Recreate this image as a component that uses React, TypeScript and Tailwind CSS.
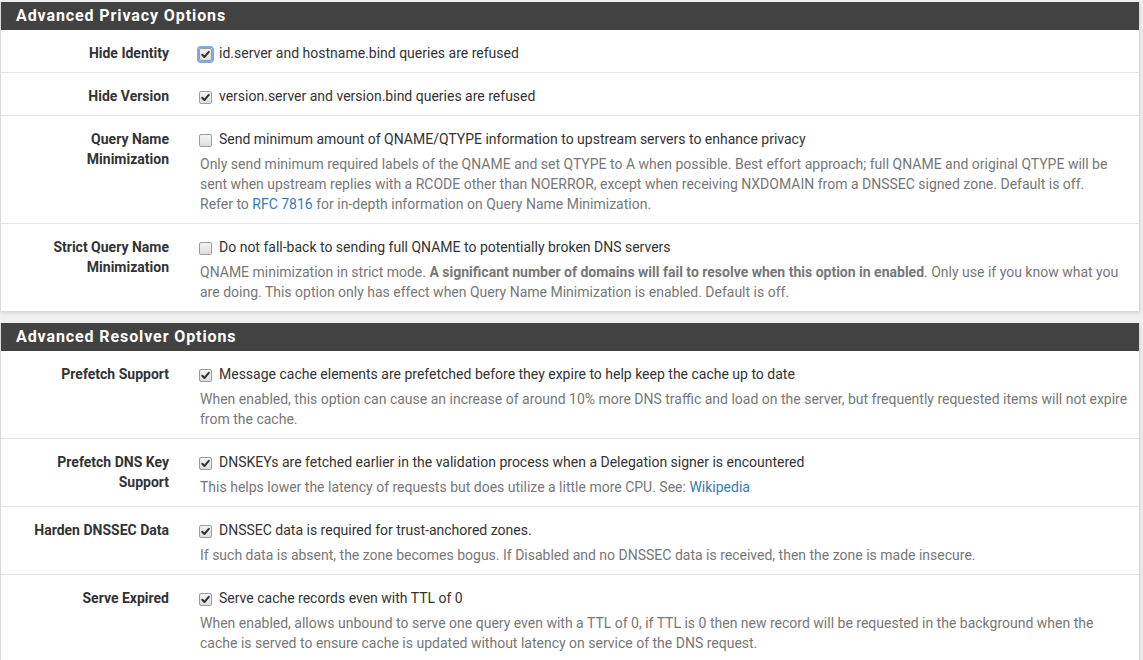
import React from "react";

const font = { fontFamily: "Roboto, 'Noto Sans', Arial, sans-serif" };

function Check({ checked, focus }: { checked?: boolean; focus?: boolean }) {
  return (
    <span
      className={
        "mt-[5px] flex h-[13px] w-[13px] shrink-0 items-center justify-center rounded-[2px] border border-[#9d9d9d] bg-gradient-to-b from-[#f4f4f4] to-[#dedede] " +
        (focus ? "outline outline-2 outline-[#7fa9ea] outline-offset-0" : "")
      }
    >
      {checked && (
        <svg width="11" height="11" viewBox="0 0 11 11">
          <path d="M2.2 5.8 L4.4 8 L8.8 2.8" fill="none" stroke="#333" strokeWidth="2" strokeLinecap="round" strokeLinejoin="round" />
        </svg>
      )}
    </span>
  );
}

function Row({
  label,
  checked,
  focus,
  text,
  help,
  first,
}: {
  label: React.ReactNode;
  checked?: boolean;
  focus?: boolean;
  text: React.ReactNode;
  help?: React.ReactNode;
  first?: boolean;
}) {
  return (
    <div className={"flex pt-[13px] pb-[9px] " + (first ? "" : "border-t border-[#e3e3e3]")}>
      <div className="w-[168px] shrink-0 pl-[15px] text-right text-[14px] font-bold leading-[20px] text-[#333]">
        {label}
      </div>
      <div className="ml-[30px] w-[930px] text-[14px] leading-[20px]">
        <div className="flex items-start gap-[7px] text-[#333]">
          <Check checked={checked} focus={focus} />
          <span>{text}</span>
        </div>
        {help && <div className="mt-[5px] pl-[1px] text-[#777]">{help}</div>}
      </div>
    </div>
  );
}

function Panel({ title, children }: { title: string; children: React.ReactNode }) {
  return (
    <div className="w-[1140px] border-x border-[#dadada] bg-white shadow-[0_2px_4px_rgba(0,0,0,0.12)]">
      <div className="h-[28px] bg-[#424242] pl-[15px] text-[16px] font-bold leading-[28px] tracking-[0.9px] text-white">
        {title}
      </div>
      {children}
    </div>
  );
}

const link = "text-[#337ab7]";

export default function App() {
  return (
    <div className="min-h-[660px] overflow-hidden bg-[#f0f0f0] pt-[2px]" style={font}>
      <Panel title="Advanced Privacy Options">
        <Row
          first
          label="Hide Identity"
          checked
          focus
          text="id.server and hostname.bind queries are refused"
        />
        <Row label="Hide Version" checked text="version.server and version.bind queries are refused" />
        <Row
          label="Query Name Minimization"
          text="Send minimum amount of QNAME/QTYPE information to upstream servers to enhance privacy"
          help={
            <>
              Only send minimum required labels of the QNAME and set QTYPE to A when possible. Best effort approach; full
              QNAME and original QTYPE will be sent when upstream replies with a RCODE other than NOERROR, except when
              receiving NXDOMAIN from a DNSSEC signed zone. Default is off.
              <br />
              Refer to <span className={link}>RFC 7816</span> for in-depth information on Query Name Minimization.
            </>
          }
        />
        <Row
          label="Strict Query Name Minimization"
          text="Do not fall-back to sending full QNAME to potentially broken DNS servers"
          help={
            <>
              QNAME minimization in strict mode.{" "}
              <b>A significant number of domains will fail to resolve when this option in enabled</b>. Only use if you
              know what you are doing. This option only has effect when Query Name Minimization is enabled. Default is
              off.
            </>
          }
        />
      </Panel>
      <div className="h-[12px]" />
      <Panel title="Advanced Resolver Options">
        <Row
          first
          label="Prefetch Support"
          checked
          text="Message cache elements are prefetched before they expire to help keep the cache up to date"
          help="When enabled, this option can cause an increase of around 10% more DNS traffic and load on the server, but frequently requested items will not expire from the cache."
        />
        <Row
          label="Prefetch DNS Key Support"
          checked
          text="DNSKEYs are fetched earlier in the validation process when a Delegation signer is encountered"
          help={
            <>
              This helps lower the latency of requests but does utilize a little more CPU. See:{" "}
              <span className={link}>Wikipedia</span>
            </>
          }
        />
        <Row
          label="Harden DNSSEC Data"
          checked
          text="DNSSEC data is required for trust-anchored zones."
          help="If such data is absent, the zone becomes bogus. If Disabled and no DNSSEC data is received, then the zone is made insecure."
        />
        <Row
          label="Serve Expired"
          checked
          text="Serve cache records even with TTL of 0"
          help="When enabled, allows unbound to serve one query even with a TTL of 0, if TTL is 0 then new record will be requested in the background when the cache is served to ensure cache is updated without latency on service of the DNS request."
        />
      </Panel>
    </div>
  );
}
